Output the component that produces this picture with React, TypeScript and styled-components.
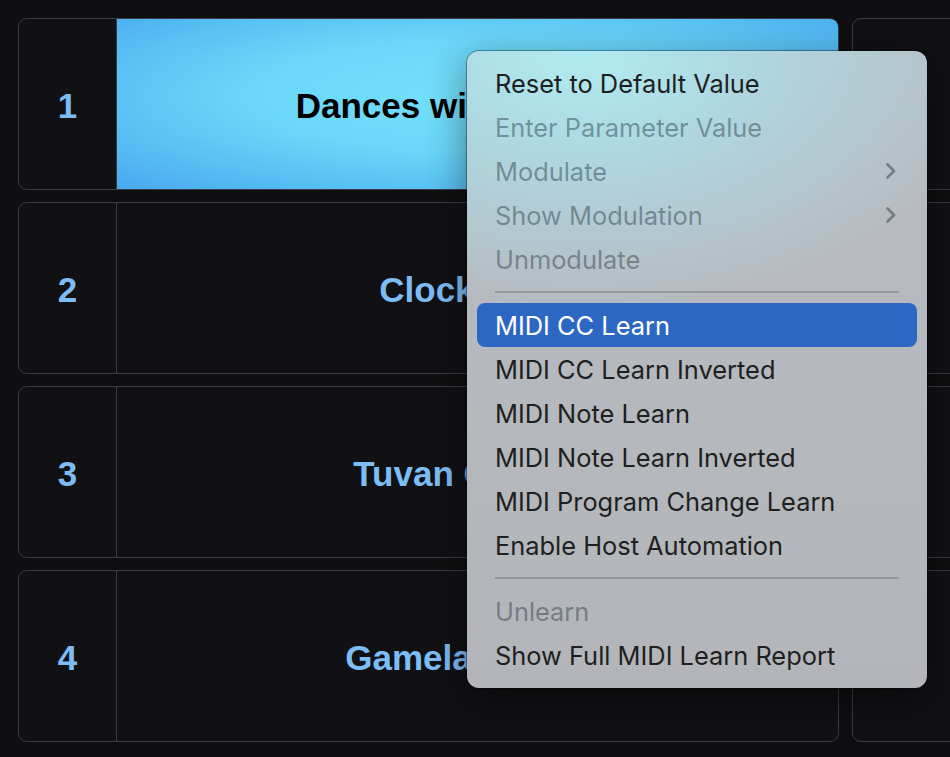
import React from "react";
import styled, { createGlobalStyle, css } from "styled-components";

const GlobalStyle = createGlobalStyle`
  html, body {
    margin: 0;
    padding: 0;
    background: #0f0f11;
  }
  * { box-sizing: border-box; }
`;

const Page = styled.div`
  position: relative;
  width: 950px;
  height: 757px;
  overflow: hidden;
  background: #0f0f11;
  padding: 18px 0 0 18px;
  display: grid;
  grid-template-columns: 821px 821px;
  grid-template-rows: repeat(4, 171.5px);
  grid-auto-flow: column;
  column-gap: 13px;
  row-gap: 12.5px;
`;

const Card = styled.div`
  display: flex;
  border: 1.5px solid #383d45;
  border-radius: 9px;
  background: #111114;
  overflow: hidden;
`;

const NumberCell = styled.div`
  width: 98px;
  flex: none;
  border-right: 1.5px solid #383d45;
  display: flex;
  align-items: center;
  justify-content: center;
  padding-top: 5px;
  font-family: "Liberation Sans", Arial, sans-serif;
  font-weight: 700;
  font-size: 35px;
  color: #7dbdf6;
`;

const TitleCell = styled.div<{ $active?: boolean }>`
  flex: 1;
  display: flex;
  align-items: center;
  justify-content: center;
  padding-top: 5px;
  font-family: "Liberation Sans", Arial, sans-serif;
  font-weight: 700;
  font-size: 35px;
  white-space: nowrap;
  color: #7dbdf6;
  ${(p) =>
    p.$active &&
    css`
      color: #000;
      background: radial-gradient(
        ellipse 70% 75% at 50% 45%,
        #74e0fb 0%,
        #6bd6f9 45%,
        #55bcf3 80%,
        #4aaaf0 100%
      );
    `}
`;

const Menu = styled.div`
  position: absolute;
  left: 467px;
  top: 51px;
  width: 460px;
  padding: 10px 10px 11px;
  border-radius: 12px;
  background:
    radial-gradient(ellipse 420px 260px at 25% 0%, rgba(176, 236, 240, 1) 0%, rgba(172, 225, 236, 0.8) 35%, rgba(180, 190, 198, 0) 100%),
    linear-gradient(180deg, #b8bcc2 0%, #b3b5ba 100%);
  box-shadow: 0 0 0 1px rgba(0, 0, 0, 0.35), 0 12px 40px rgba(0, 0, 0, 0.45);
  font-family: Inter, "Open Sans", sans-serif;
  font-size: 25.4px;
`;

const Item = styled.div<{ $disabled?: boolean; $selected?: boolean }>`
  height: 44px;
  display: flex;
  align-items: center;
  justify-content: space-between;
  padding: 0 20px 0 18px;
  border-radius: 8px;
  color: ${(p) => (p.$disabled ? "rgba(20, 40, 50, 0.42)" : "#1e1f21")};
  ${(p) =>
    p.$selected &&
    css`
      background: #2c67c4;
      color: #ffffff;
    `}
`;

const Separator = styled.div`
  height: 22px;
  display: flex;
  align-items: center;
  padding: 0 18px;
  &::after {
    content: "";
    flex: 1;
    height: 2px;
    background: rgba(90, 95, 100, 0.35);
  }
`;

const Chevron = () => (
  <svg width="12" height="18" viewBox="0 0 12 18" fill="none">
    <path
      d="M2.5 2.5 L9 9 L2.5 15.5"
      stroke="rgba(60,70,80,0.55)"
      strokeWidth="2.6"
      strokeLinecap="round"
      strokeLinejoin="round"
    />
  </svg>
);

const rows = [
  { n: 1, title: "Dances with Dolphins", active: true },
  { n: 2, title: "Clockworks" },
  { n: 3, title: "Tuvan Caravan" },
  { n: 4, title: "Gamelan Songs" },
  { n: 5, title: "" },
  { n: 6, title: "" },
  { n: 7, title: "" },
  { n: 8, title: "" },
];

type Entry =
  | { kind: "item"; label: string; disabled?: boolean; selected?: boolean; sub?: boolean }
  | { kind: "sep" };

const entries: Entry[] = [
  { kind: "item", label: "Reset to Default Value" },
  { kind: "item", label: "Enter Parameter Value", disabled: true },
  { kind: "item", label: "Modulate", disabled: true, sub: true },
  { kind: "item", label: "Show Modulation", disabled: true, sub: true },
  { kind: "item", label: "Unmodulate", disabled: true },
  { kind: "sep" },
  { kind: "item", label: "MIDI CC Learn", selected: true },
  { kind: "item", label: "MIDI CC Learn Inverted" },
  { kind: "item", label: "MIDI Note Learn" },
  { kind: "item", label: "MIDI Note Learn Inverted" },
  { kind: "item", label: "MIDI Program Change Learn" },
  { kind: "item", label: "Enable Host Automation" },
  { kind: "sep" },
  { kind: "item", label: "Unlearn", disabled: true },
  { kind: "item", label: "Show Full MIDI Learn Report" },
];

export default function App() {
  return (
    <>
      <GlobalStyle />
      <Page>
        {rows.map((r) => (
          <Card key={r.n}>
            <NumberCell>{r.n}</NumberCell>
            <TitleCell $active={r.active}>{r.title}</TitleCell>
          </Card>
        ))}
        <Menu>
          {entries.map((e, i) =>
            e.kind === "sep" ? (
              <Separator key={i} />
            ) : (
              <Item key={i} $disabled={e.disabled} $selected={e.selected}>
                <span>{e.label}</span>
                {e.sub && <Chevron />}
              </Item>
            )
          )}
        </Menu>
      </Page>
    </>
  );
}
